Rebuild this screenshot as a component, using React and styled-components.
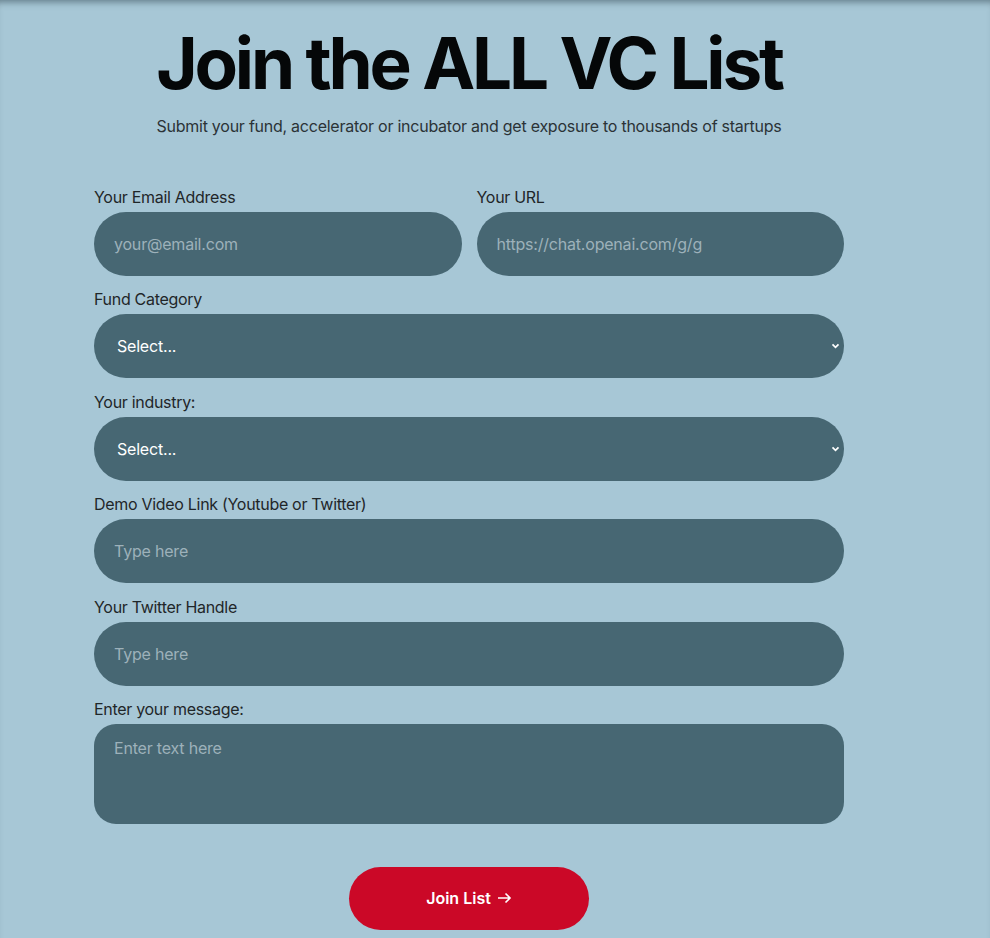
import React from 'react';
import styled, { createGlobalStyle } from 'styled-components';

const Global = createGlobalStyle`
  html, body {
    margin: 0;
    padding: 0;
    background: #a7c7d6;
  }
  * { box-sizing: border-box; }
`;

const Page = styled.div`
  min-height: 938px;
  background: #a7c7d6;
  font-family: Inter, "Noto Sans", sans-serif;
  color: #1f2a2e;
  box-shadow: inset 0 7px 7px -5px rgba(40, 60, 70, 0.55);
  padding: 23px 0 0 94px;
`;

const Column = styled.div`
  width: 750px;
  display: flex;
  flex-direction: column;
  align-items: center;
`;

const Title = styled.h1`
  margin: 0;
  font-size: 71px;
  line-height: 80px;
  font-weight: 700;
  letter-spacing: -3.2px;
  color: #050708;
`;

const Subtitle = styled.p`
  margin: 12px 0 0;
  font-size: 16px;
  line-height: 22px;
  letter-spacing: -0.25px;
  color: #2b3337;
`;

const Form = styled.form`
  width: 100%;
  margin-top: 50px;
  display: flex;
  flex-direction: column;
  gap: 13.4px;
`;

const Row = styled.div`
  display: grid;
  grid-template-columns: 1fr 1fr;
  gap: 15px;
`;

const Group = styled.label`
  display: flex;
  flex-direction: column;
`;

const Label = styled.span`
  font-size: 16px;
  line-height: 20px;
  letter-spacing: -0.3px;
  margin-bottom: 5px;
  color: #1f2629;
`;

const fieldBase = `
  width: 100%;
  border: none;
  outline: none;
  background: #476773;
  font-family: Inter, "Noto Sans", sans-serif;
  font-size: 16px;
  letter-spacing: -0.2px;
  color: #ffffff;
`;

const Input = styled.input`
  ${fieldBase}
  height: 64px;
  border-radius: 32px;
  padding: 0 20px;
  &::placeholder { color: #9db1ba; }
`;

const Select = styled.select`
  ${fieldBase}
  height: 64px;
  border-radius: 32px;
  padding: 0 40px 0 23px;
  appearance: none;
  background-image: url("data:image/svg+xml,%3Csvg xmlns='http://www.w3.org/2000/svg' width='10' height='7' viewBox='0 0 10 7'%3E%3Cpath d='M1.5 1.5 5 5 8.5 1.5' fill='none' stroke='white' stroke-width='2'/%3E%3C/svg%3E");
  background-repeat: no-repeat;
  background-position: right 4px center;
  background-size: 9px 6px;
`;

const TextArea = styled.textarea`
  ${fieldBase}
  height: 100px;
  border-radius: 22px;
  padding: 14px 20px;
  resize: none;
  &::placeholder { color: #9db1ba; }
`;

const Button = styled.button`
  margin-top: 43px;
  width: 240px;
  height: 63px;
  border: none;
  border-radius: 32px;
  background: #cb0827;
  color: #ffffff;
  font-family: Inter, "Noto Sans", sans-serif;
  font-size: 16px;
  font-weight: 600;
  display: flex;
  align-items: center;
  justify-content: center;
  gap: 6px;
  cursor: pointer;
`;

const Field = ({ label, placeholder }) => (
  <Group>
    <Label>{label}</Label>
    <Input placeholder={placeholder} />
  </Group>
);

const Choice = ({ label }) => (
  <Group>
    <Label>{label}</Label>
    <Select defaultValue="">
      <option value="">Select...</option>
    </Select>
  </Group>
);

export default function App() {
  return (
    <Page>
      <Global />
      <Column>
        <Title>Join the ALL VC List</Title>
        <Subtitle>Submit your fund, accelerator or incubator and get exposure to thousands of startups</Subtitle>
        <Form onSubmit={(e) => e.preventDefault()}>
          <Row>
            <Field label="Your Email Address" placeholder="your@email.com" />
            <Field label="Your URL" placeholder="https://chat.openai.com/g/g" />
          </Row>
          <Choice label="Fund Category" />
          <Choice label="Your industry:" />
          <Field label="Demo Video Link (Youtube or Twitter)" placeholder="Type here" />
          <Field label="Your Twitter Handle" placeholder="Type here" />
          <Group>
            <Label>Enter your message:</Label>
            <TextArea placeholder="Enter text here" />
          </Group>
        </Form>
        <Button type="submit">
          Join List
          <svg width="15" height="12" viewBox="0 0 15 12" fill="none" stroke="white" strokeWidth="1.6">
            <path d="M1 6h12M8.5 1.5 13 6l-4.5 4.5" />
          </svg>
        </Button>
      </Column>
    </Page>
  );
}
